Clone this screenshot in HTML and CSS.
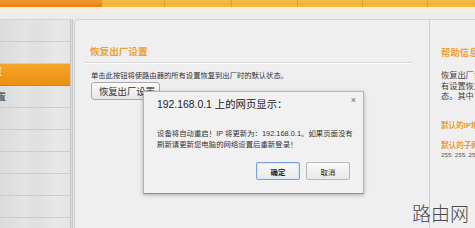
FILE: index.html
```html
<!DOCTYPE html>
<html lang="zh-CN">
<head>
<meta charset="utf-8">
<title>恢复出厂设置</title>
<link rel="stylesheet" href="styles.css">
</head>
<body>
<header class="topbar">
  <div class="topbar-active"></div>
  <div class="topbar-tabs">
    <span class="topbar-tab t1"></span>
    <span class="topbar-tab t2"></span>
    <span class="topbar-tab t3"></span>
    <span class="topbar-tab t4"></span>
    <span class="topbar-tab t5"></span>
  </div>
</header>
<div class="topfade"></div>
<div class="layout">
  <nav class="sidebar">
    <div class="nav-item first"></div>
    <div class="nav-item"></div>
    <div class="nav-item active"><span class="nav-label l-active">恢复出厂设置</span></div>
    <div class="nav-item"><span class="nav-label l-next">备份和载入配置</span></div>
    <div class="nav-item"></div>
    <div class="nav-item"></div>
    <div class="nav-item"></div>
    <div class="nav-item"></div>
    <div class="nav-item"></div>
    <div class="nav-item"></div>
  </nav>
  <main class="content">
    <h2 class="section-title">恢复出厂设置</h2>
    <p class="desc">单击此按钮将使路由器的所有设置恢复到出厂时的默认状态。</p>
    <button class="btn-restore">恢复出厂设置</button>
  </main>
  <aside class="help">
    <h3 class="help-title">帮助信息</h3>
    <p class="help-text">恢复出厂设置将使路由器的所</p>
    <p class="help-text">有设置恢复到出厂时的默认状</p>
    <p class="help-text">态。其中：</p>
    <p class="help-key k1">默认的IP地址：192.168.0.1</p>
    <p class="help-key k2">默认的子网掩码：</p>
    <p class="help-val">255. 255. 255. 0</p>
  </aside>
</div>

<div class="dialog">
  <div class="dialog-title">192.168.0.1 上的网页显示：</div>
  <span class="dialog-close">×</span>
  <div class="dialog-msg">设备将自动重启！IP 将更新为：192.168.0.1。如果页面没有<br>刷新请更新您电脑的网络设置后重新登录！</div>
  <div class="dialog-actions">
    <button class="dlg-btn primary">确定</button>
    <button class="dlg-btn">取消</button>
  </div>
</div>

<div class="watermark">路由网</div>
</body>
</html>
```
FILE: styles.css
```css
* { box-sizing: border-box; margin: 0; padding: 0; }
html, body { width: 475px; height: 228px; overflow: hidden; }
body {
  position: relative;
  background: #e9e9e9;
  font-family: "Liberation Sans", "Noto Sans CJK SC", sans-serif;
  color: #333;
}

.topbar { display: flex; height: 7px; }
.topbar-active { width: 102px; background: linear-gradient(#f19a30, #e5811b); }
.topbar-tabs { flex: 1; display: flex; background: linear-gradient(#f4c04c, #efb236 50%, #f3bb44); }
.topbar-tab { border-right: 1px solid #dba23a; }
.t1 { width: 63px; }
.t2 { width: 67px; }
.t3 { width: 66px; }
.t4 { width: 65px; }
.t5 { width: 65px; }

.topfade { height: 12px; background: linear-gradient(#fbefd4, #eeeeee 55%, #ebebeb); }

.layout { display: flex; height: 209px; }

.sidebar {
  width: 73px;
  border-top: 1px solid #d4d4d4;
  border-right: 3px double #c6c6c6;
  background: linear-gradient(90deg, #dcdcdc, #e4e4e4 35%, #e0e0e0 55%, #e8e8e8 80%, #e4e4e4);
  overflow: hidden;
}
.nav-item {
  height: 22px;
  border-bottom: 1px solid #cbcbcb;
  display: flex;
  align-items: center;
  overflow: hidden;
  white-space: nowrap;
}
.nav-item.active { background: linear-gradient(#f5a62a, #ec8f12); border-bottom-color: #d7800f; }
.nav-label { font-size: 9px; line-height: 10px; }
.l-active { color: #fff; margin-left: -52px; margin-top: -6px; }
.l-next { color: #333; margin-left: -57px; }

.content {
  width: 355px;
  margin-left: 1px;
  border-top: 1px solid #d2d2d2;
  border-left: 1px solid #cdcdcd;
  border-top-left-radius: 5px;
  background: #efefef;
  padding: 0 17px 0 10px;
}
.section-title {
  margin-top: 26px;
  padding: 0 0 4px 5px;
  font-size: 9.6px;
  line-height: 12px;
  font-weight: bold;
  color: #eb9f36;
  border-bottom: 1px solid #d9d9d9;
  box-shadow: 0 1px 0 #fafafa;
}
.desc {
  margin-top: 8px;
  padding-left: 6px;
  font-size: 7.3px;
  line-height: 9px;
  color: #333;
  white-space: nowrap;
}
.btn-restore {
  display: block;
  margin: 2px 0 0 6px;
  width: 69px;
  height: 18px;
  padding: 0 0 0 7px;
  font-family: inherit;
  font-size: 9.3px;
  color: #333;
  text-align: left;
  white-space: nowrap;
  overflow: hidden;
  border: 1px solid #a9a9a9;
  border-radius: 3px;
  background: linear-gradient(#fbfbfb, #e6e6e6);
}

.help {
  flex: 1;
  border-top: 1px solid #d2d2d2;
  border-left: 1px solid #cfcfcf;
  background: #efefef;
  padding-left: 11px;
  white-space: nowrap;
  overflow: hidden;
}
.help-title {
  margin-top: 27px;
  font-size: 9.4px;
  line-height: 12px;
  font-weight: bold;
  color: #ee9f3a;
}
.help-text { font-size: 8.2px; line-height: 10.5px; color: #444; }
.help-title + .help-text { margin-top: 12px; }
.help-key { font-size: 7.6px; line-height: 10px; font-weight: bold; color: #eb9a32; }
.k1 { margin-top: 18px; }
.k2 { margin-top: 10px; }
.help-val { font-size: 6.2px; line-height: 8px; color: #555; }

.dialog {
  position: absolute;
  left: 143px;
  top: 91px;
  width: 221px;
  height: 103px;
  background: #f1f1f1;
  border: 1px solid #b4b4b4;
  border-bottom-color: #8e8e8e;
  box-shadow: 0 1px 4px rgba(0, 0, 0, 0.28);
  padding: 6px 13px 0 13px;
}
.dialog-title {
  font-size: 10.4px;
  line-height: 14px;
  color: #222;
  white-space: nowrap;
}
.dialog-close {
  position: absolute;
  right: 7px;
  top: 3px;
  font-size: 9px;
  color: #666;
}
.dialog-msg {
  margin-top: 16px;
  font-size: 7.4px;
  line-height: 11px;
  color: #333;
  white-space: nowrap;
}
.dialog-actions {
  display: flex;
  justify-content: flex-end;
  gap: 6px;
  margin-top: 12px;
}
.dlg-btn {
  width: 44px;
  height: 18px;
  font-family: inherit;
  font-size: 7.4px;
  color: #222;
  border: 1px solid #b8b8b8;
  border-radius: 2px;
  background: linear-gradient(#f9f9f9, #e8e8e8);
}
.dlg-btn.primary {
  border-color: #7ba2d8;
  box-shadow: inset 0 0 0 1px #d8e6f7;
  font-weight: bold;
}

.watermark {
  position: absolute;
  left: 412px;
  top: 200px;
  font-family: "Noto Sans CJK SC", sans-serif;
  font-weight: 300;
  font-size: 19px;
  line-height: 26px;
  color: #4a4a4a;
}
```
